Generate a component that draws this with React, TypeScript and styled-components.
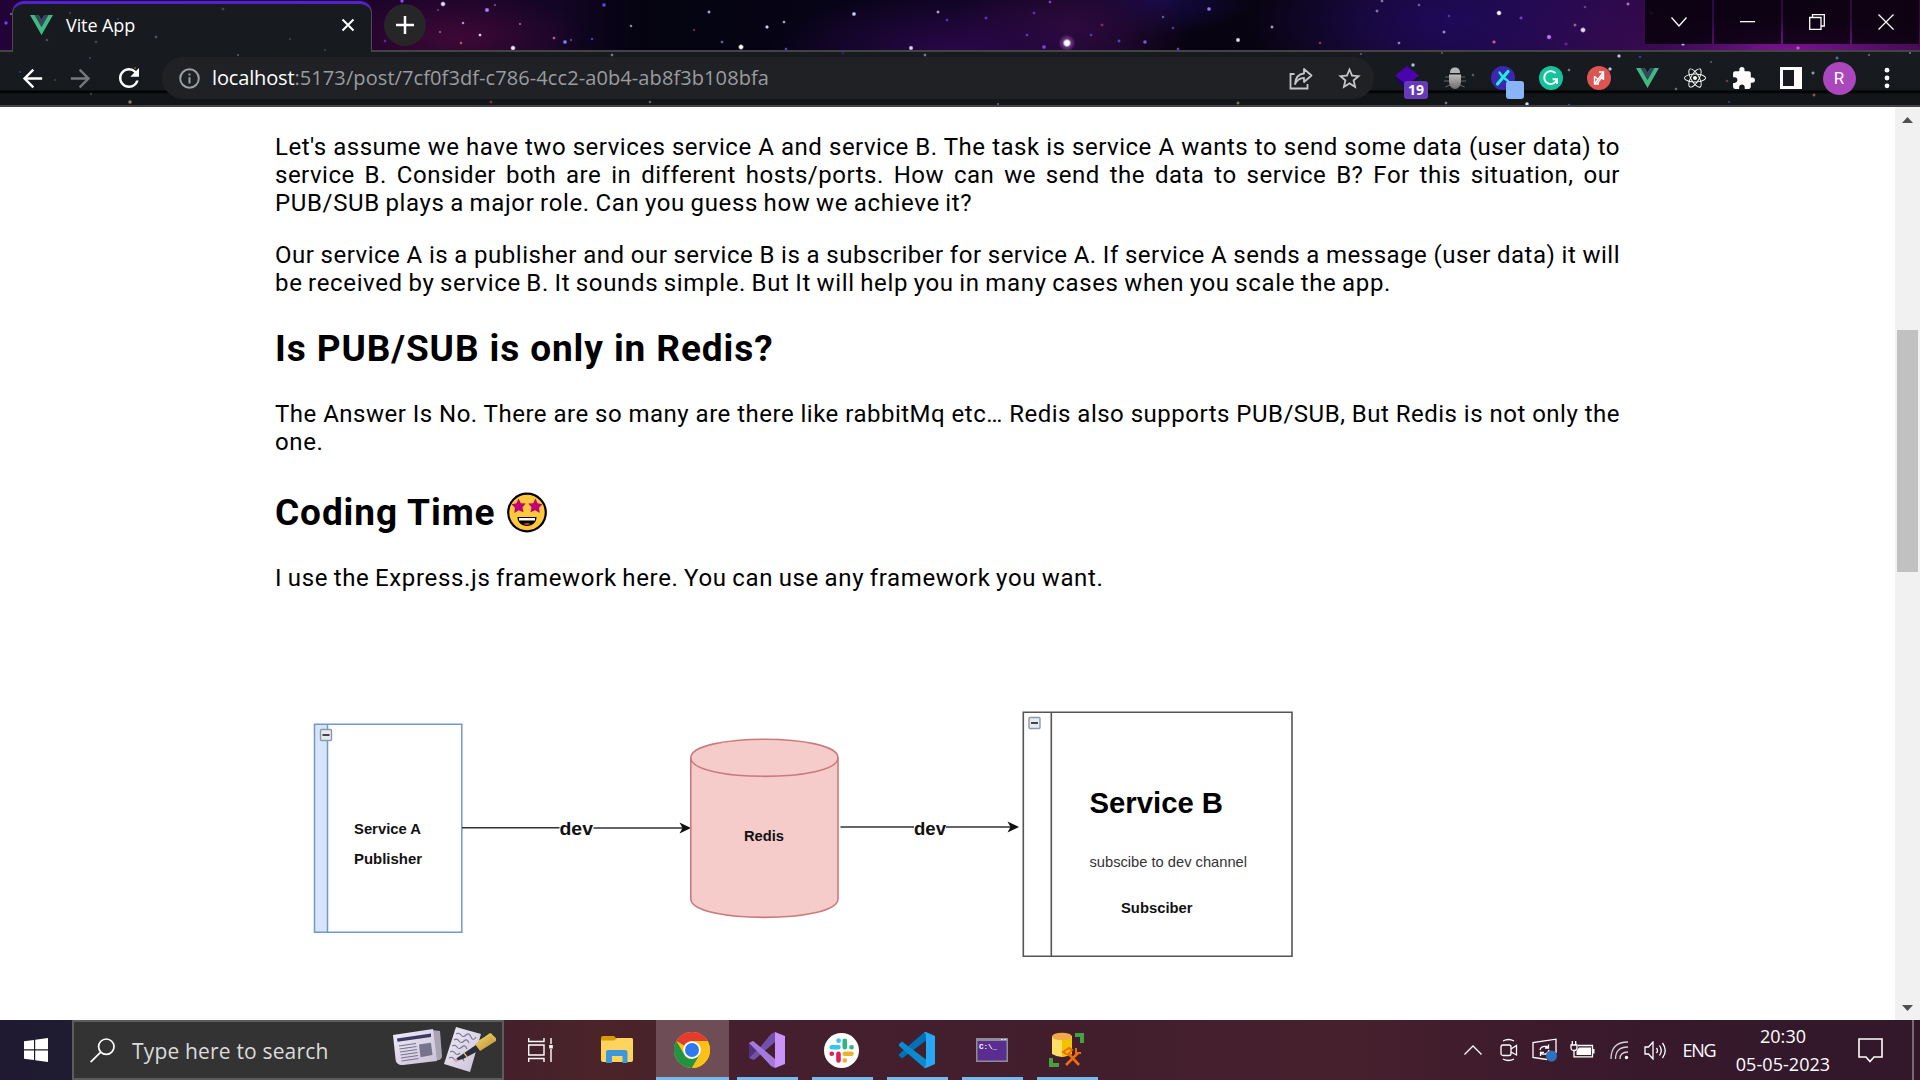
import React from "react";
import styled, { createGlobalStyle } from "styled-components";
import { MdArrowBack, MdArrowForward, MdExtension, MdRefresh, MdStarBorder } from "react-icons/md";
import { FaReact } from "react-icons/fa";

const GlobalStyle = createGlobalStyle`
  * { box-sizing: border-box; }
  body { margin: 0; background: #fff; overflow: hidden; }
  svg { display: block; flex: none; }
`;

const uiFont = `"Open Sans", "Noto Sans", sans-serif`;

/* ---------- star field backgrounds ---------- */

type Star = [x: number, y: number, r: number, color: string];

const field = (stars: Star[]) =>
  stars
    .map(([x, y, r, c]) => `radial-gradient(circle at ${x}px ${y}px, ${c} 0, ${c} ${r * 0.6}px, transparent ${r + 0.6}px)`)
    .join(",");

const skyStars: Star[] = [
  [6, 23, 1.6, "#7a3cff"], [11, 14, 1, "#7d5a8c"], [402, 1, 1.6, "#8c4dff"], [443, 4, 2.2, "#eadcff"],
  [487, 10, 2, "#b37cff"], [495, 5, 1, "#7a4a80"], [438, 10, 1, "#6a3370"], [463, 23, 1.1, "#c98ad0"],
  [440, 32, 1, "#a05890"], [480, 35, 1.2, "#eccbe8"], [461, 43, 1.2, "#b3506e"], [513, 48, 2.2, "#f3eaff"],
  [520, 24, 1, "#9d5f91"], [554, 38, 1.2, "#b06088"], [565, 42, 1.8, "#7b83ff"], [571, 40, 1, "#72416c"],
  [604, 5, 1.8, "#5a48e0"], [631, 26, 1.1, "#8c8cad"], [592, 39, 1.1, "#4a3fb0"], [385, 41, 1.1, "#5733a0"],
  [709, 12, 1.3, "#a9a7cf"], [694, 30, 1, "#733340"], [767, 27, 1.5, "#d5d4f0"], [784, 22, 1.2, "#a0a0c5"],
  [722, 42, 1.2, "#66668c"], [741, 47, 2.4, "#ffffff"], [786, 49, 1.2, "#4747aa"], [854, 14, 1.8, "#c8d0ff"],
  [938, 12, 1.3, "#a8a3d3"], [911, 48, 2, "#d9d0ff"], [947, 20, 1.2, "#5c2fb0"], [986, 18, 1.4, "#5336a8"],
  [1034, 13, 1.2, "#6732a3"], [1050, 2, 1.3, "#7a3cb0"], [1027, 35, 1.2, "#5b3aa5"], [1044, 47, 1.8, "#8244e0"],
  [1067, 43, 3.8, "#ffffff"], [1067, 43, 8, "rgba(200,120,230,.35)"], [1102, 25, 1.3, "#70345f"],
  [1091, 35, 1.2, "#3548a0"], [1119, 41, 1.3, "#374fc0"], [1145, 42, 1.7, "#7859e0"], [1163, 17, 1.1, "#68608c"],
  [1209, 9, 1.8, "#9a77f0"], [1173, 28, 1.1, "#54409d"], [1238, 40, 2, "#e9d5f5"], [1272, 27, 1.3, "#a5a0b5"],
  [1178, 49, 1.2, "#6342aa"], [1320, 43, 1.1, "#9a3855"], [1377, 11, 1.3, "#85729c"], [1382, 1, 1.2, "#8d77a5"],
  [1399, 43, 1.2, "#9779b8"], [1419, 5, 1.2, "#7052a8"], [1444, 32, 1.3, "#a48ac5"], [1449, 16, 1.2, "#5d2ca5"],
  [1499, 13, 2.2, "#ffffff"], [1521, 18, 1.4, "#7440d0"], [1494, 42, 1.5, "#d6559e"], [1549, 37, 2.1, "#c878f0"],
  [1566, 44, 1.5, "#67278a"], [1583, 30, 2.4, "#ead7f7"], [1575, 25, 1.3, "#a15c90"], [1628, 4, 1.4, "#a576b0"],
  [1585, 7, 1.1, "#73408b"], [1651, 13, 1.6, "#6b5277"], [1683, 44, 1.6, "#b6a9ff"], [1798, 48, 1.5, "#d45bc5"],
];

const toolbarStars: Star[] = [
  [90, 6, 1, "#39434a"], [20, 20, 1, "#27406f"], [55, 28, 1, "#3a3f2b"], [135, 16, 1, "#5d5522"],
  [130, 50, 1.7, "#86805a"], [91, 42, 1, "#3f3f46"], [238, 3, 1, "#50555d"], [491, 50, 1.3, "#693b32"],
  [612, 3, 1.2, "#737982"], [843, 1, 1, "#292b87"], [925, 3, 1.2, "#7a7a7d"], [650, 50, 1.1, "#676a70"],
  [998, 52, 1, "#60605f"], [1238, 51, 1.3, "#777758"], [1361, 2, 1, "#535762"], [1442, 1, 1, "#595c55"],
  [1413, 13, 1.7, "#aebed3"], [1473, 23, 1.2, "#535b65"], [1446, 51, 1.2, "#747886"], [1527, 52, 1.7, "#d0e2fa"],
  [1569, 18, 1.2, "#717781"], [1610, 17, 1.6, "#b8c8e8"], [1619, 4, 1.6, "#b3c3e3"], [1569, 53, 1.1, "#35558a"],
  [1640, 5, 1.1, "#28438a"], [1676, 37, 1.2, "#626872"], [1711, 10, 1, "#59555b"], [1727, 29, 1.1, "#65434c"],
  [1813, 21, 1.4, "#8f9caf"], [1814, 43, 1.3, "#8a5c53"], [1729, 50, 1, "#313c8c"], [1837, 6, 1.4, "#49719b"],
  [1869, 3, 1, "#65696d"], [1910, 1, 1, "#686d72"],
];

const tabStars: Star[] = [
  [57, 9, 1, "#3d4450"], [210, 5, 1.2, "#4b4346"], [105, 15, 1, "#2a3f63"], [34, 36, 1.2, "#465158"],
  [83, 38, 1.2, "#414b51"], [143, 33, 1.2, "#4e5863"], [277, 35, 1, "#3c3e41"], [312, 46, 1, "#3d4043"],
];

/* ---------- page frame ---------- */

const Screen = styled.div`
  width: 1920px;
  height: 1080px;
  display: flex;
  flex-direction: column;
  overflow: hidden;
  background: #fff;
`;

const TabStrip = styled.header`
  height: 52px;
  flex: none;
  display: flex;
  align-items: flex-start;
  padding: 0 1px 0 12px;
  border-bottom: 2px solid #434346;
  background:
    ${field(skyStars)},
    radial-gradient(ellipse 130px 50px at 455px 38px, #3e0836 0, transparent 100%),
    radial-gradient(ellipse 190px 60px at 960px 50px, #290748 0, transparent 100%),
    radial-gradient(ellipse 120px 60px at 1070px 28px, #300a3c 0, transparent 100%),
    radial-gradient(ellipse 100px 35px at 1155px 0px, #150b4a 0, transparent 100%),
    radial-gradient(ellipse 200px 90px at 1450px 20px, #1d0a58 0, transparent 100%),
    radial-gradient(ellipse 160px 70px at 1600px 30px, #370a4c 0, transparent 100%),
    radial-gradient(ellipse 180px 34px at 1790px 50px, #7a1391 0, transparent 100%),
    linear-gradient(90deg, #210338 0, #1b0329 380px, #120526 560px, #04030f 640px, #060415 800px, #0d0420 1000px, #070310 1220px, #0b0515 1320px, #26094b 1560px, #35073e 1920px);
`;

const Tab = styled.div`
  width: 360px;
  height: 52px;
  flex: none;
  display: flex;
  align-items: center;
  padding: 0 16px 7px 17px;
  border: 1px solid #4b4a50;
  border-bottom: 0;
  border-top: 3px solid #5322cc;
  border-radius: 12px 12px 0 0;
  background: ${field(tabStars)}, #171a1f;
  margin-top: 1px;
`;

const TabTitle = styled.span`
  flex: 1;
  margin-left: 13px;
  font: 400 18px/24px ${uiFont};
  letter-spacing: -0.1px;
  color: #fff;
`;

const NewTab = styled.div`
  width: 42px;
  height: 42px;
  margin: 4px 0 0 12px;
  border-radius: 50%;
  display: grid;
  place-items: center;
  background: #262527;
`;

const WindowButtons = styled.div`
  display: flex;
  gap: 2px;
  margin-left: auto;
`;

const WindowButton = styled.div`
  width: 67px;
  height: 44px;
  display: grid;
  place-items: center;
  background: rgba(8, 1, 12, 0.86);
`;

const Toolbar = styled.nav`
  height: 55px;
  flex: none;
  display: flex;
  align-items: center;
  padding: 0 0 1px 18px;
  border-bottom: 2px solid #434346;
  background:
    ${field(toolbarStars)},
    linear-gradient(180deg, #171a1f 0, #171a1d 38px, #000 39px, #000 40px, #131619 42px, #131619 100%);
`;

const NavIcon = styled.span<{ $dim?: boolean }>`
  width: 28px;
  flex: none;
  margin-right: 20px;
  display: grid;
  place-items: center;
  color: ${(p) => (p.$dim ? "#77797c" : "#fff")};
`;

const Omnibox = styled.div`
  width: 1212px;
  height: 42px;
  flex: none;
  display: flex;
  align-items: center;
  padding: 0 14px 0 17px;
  border-radius: 21px;
  background: #202124;
`;

const Url = styled.span`
  flex: 1;
  margin: 0 0 0 12px;
  font: 400 20px/28px ${uiFont};
  letter-spacing: 0.09px;
  color: #9a9ca0;
  white-space: nowrap;
`;

const Host = styled.span`
  color: #fff;
  letter-spacing: -0.15px;
`;

const OmniIcon = styled.span`
  width: 24px;
  margin-left: 23px;
  color: #c5c6c8;
`;

const Extensions = styled.div`
  display: flex;
  align-items: center;
  margin-left: 9px;
  height: 42px;
`;

const Extension = styled.span`
  width: 48px;
  height: 42px;
  display: grid;
  place-items: center;
  color: #fff;
`;

const Badged = styled.span`
  position: relative;
  width: 24px;
  height: 24px;
`;

const Badge = styled.span<{ $color: string; $w: number; $x: number }>`
  position: absolute;
  left: ${(p) => p.$x}px;
  top: 15px;
  width: ${(p) => p.$w}px;
  height: 18px;
  border-radius: 3px;
  background: ${(p) => p.$color};
  color: #fff;
  font: 700 14px/18px ${uiFont};
  text-align: center;
`;

const Avatar = styled.span`
  width: 33px;
  height: 33px;
  border-radius: 50%;
  background: #ab47bc;
  color: #fff;
  font: 400 17px/33px Roboto, sans-serif;
  text-align: center;
`;

/* ---------- article ---------- */

const Viewport = styled.main`
  flex: 1;
  min-height: 0;
  display: flex;
  background: #fff;
`;

const Article = styled.article`
  flex: 1;
  min-height: 0;
  overflow: hidden;
  padding: 26px 0 0 275px;
  font: 400 24px/28px Roboto, sans-serif;
  color: #000;
`;

const Paragraph = styled.p`
  width: 1345px;
  margin: 0 0 24px;
`;

const Line = styled.span<{ $full?: boolean }>`
  display: block;
  width: 1345px;
  white-space: pre-wrap;
  letter-spacing: ${(p) => (p.$full ? 0.5 : 0.65)}px;
  word-spacing: -1px;
  text-align-last: ${(p) => (p.$full ? "justify" : "left")};
`;

const Heading = styled.h2`
  display: flex;
  align-items: center;
  gap: 12px;
  margin: 30px 0;
  font: 700 37px/43px Roboto, sans-serif;
  letter-spacing: 0.9px;
  white-space: nowrap;
`;

const EmojiHeading = styled(Heading)`
  padding-top: 5px;
`;

const Figure = styled.figure`
  margin: 113px 0 0 30px;
`;

const ScrollTrack = styled.aside`
  width: 25px;
  display: flex;
  flex-direction: column;
  align-items: center;
  background: #f1f1f1;
`;

const ScrollButton = styled.span`
  height: 25px;
  display: grid;
  place-items: center;
`;

const ScrollSpace = styled.span<{ $h?: number }>`
  ${(p) => (p.$h ? `height: ${p.$h}px;` : "flex: 1;")}
`;

const ScrollThumb = styled.span`
  width: 21px;
  height: 242px;
  background: #c1c1c1;
`;

/* ---------- taskbar ---------- */

const Taskbar = styled.footer`
  height: 60px;
  flex: none;
  display: flex;
  background: linear-gradient(90deg, #1f1a31 0, #1f1b30 72px, #441f2c 504px, #4b2428 600px, #451f2d 740px, #421e2d 1100px, #47202d 1350px, #3b1a2c 1560px, #33182b 1800px, #33172a 100%);
`;

const StartButton = styled.div`
  width: 72px;
  display: grid;
  place-items: center;
`;

const SearchBox = styled.div`
  width: 432px;
  display: flex;
  align-items: center;
  padding: 0 4px 0 16px;
  border: 2px solid #5c5c5c;
  background: #333;
`;

const SearchText = styled.span`
  flex: 1;
  margin: 2px 0 0 17px;
  font: 400 21px/28px ${uiFont};
  letter-spacing: 0.17px;
  color: #dcdcdc;
  white-space: nowrap;
`;

const TaskButton = styled.div<{ $w: number; $active?: boolean }>`
  width: ${(p) => p.$w}px;
  display: grid;
  place-items: center;
  padding-right: 2px;
`;

const RunningButton = styled(TaskButton)<{ $line: number }>`
  background:
    linear-gradient(#76b9ed, #76b9ed) center bottom / ${(p) => p.$line}px 3px no-repeat
    ${(p) => (p.$active ? ", linear-gradient(#6f4d56, #6f4d56)" : "")};
`;

const Tray = styled.div`
  margin-left: auto;
  display: flex;
  align-items: center;
  color: #fff;
`;

const TrayItem = styled.span<{ $w: number }>`
  width: ${(p) => p.$w}px;
  display: grid;
  place-items: center;
`;

const Language = styled(TrayItem)`
  font: 400 18px/27px ${uiFont};
  letter-spacing: -1.2px;
`;

const Clock = styled.div`
  width: 116px;
  text-align: center;
  font: 400 18px/28px ${uiFont};
  letter-spacing: 0.05px;
`;

const PeekLine = styled.span`
  width: 2px;
  height: 60px;
  margin: 0 6px 0 13px;
  background: #7b6974;
`;

/* ---------- icons ---------- */

const VueLogo = ({ w = 23, h = 20 }: { w?: number; h?: number }) => (
  <svg width={w} height={h} viewBox="0 0 24 21" preserveAspectRatio="none">
    <path d="M0 0H9L12 5.2 15 0H24L12 21Z" fill="#42b883" />
    <path d="M4.7 0H9L12 5.2 15 0H19.3L12 12.8Z" fill="#35495e" />
  </svg>
);

const InfoIcon = () => (
  <svg width="21" height="21" viewBox="0 0 21 21" fill="none" stroke="#9aa0a6" strokeWidth="2">
    <circle cx="10.5" cy="10.5" r="9.3" />
    <path d="M10.5 9.3V15.5M10.5 5.4V7.5" />
  </svg>
);

const ShareIcon = () => (
  <svg width="24" height="24" viewBox="0 0 24 24" fill="none" stroke="#c5c6c8" strokeWidth="1.8">
    <path d="M5.500 8H1.500V22.500H18.500V18" />
    <path d="M6 18C6.500 11.500 9.500 8 15 7.500V3L22.500 9.500 15 16V11.800C11 12 8 14 6 18Z" strokeLinejoin="round" />
  </svg>
);

const DiamondIcon = () => (
  <svg width="24" height="24" viewBox="0 0 24 24">
    <path d="M1 14 5 11 20 20 12 24Z" fill="#210070" />
    <path d="M12 0 24 9.500 12 19 0 9.500Z" fill="#4a04ad" />
  </svg>
);

const BugIcon = () => (
  <svg width="22" height="24" viewBox="0 0 22 24">
    <defs>
      <linearGradient id="bug" x1="0" y1="0" x2="0" y2="1">
        <stop offset="0" stopColor="#bdbdbd" />
        <stop offset="1" stopColor="#6c6c6c" />
      </linearGradient>
    </defs>
    <path d="M5 11H1M5 15H0M6 19L1.500 21M17 11H21M17 15H22M16 19L20.500 21" stroke="#66686a" strokeWidth="1" />
    <path d="M6 7C6 3 8 1.500 11 1.500S16 3 16 7Z" fill="#b5b5b5" />
    <path d="M5 8.500H17V15C17 20 14 23 11 23S5 20 5 15Z" fill="url(#bug)" />
  </svg>
);

const PlaneIcon = () => (
  <svg width="24" height="24" viewBox="0 0 24 24">
    <circle cx="12" cy="12" r="12" fill="#3c28b0" />
    <path d="M17 5.500 6.500 18" stroke="#1df2dc" strokeWidth="3.200" strokeLinecap="round" />
    <path d="M8.500 6.500 11 10M13 12 17 15" stroke="#1df2dc" strokeWidth="2.200" strokeLinecap="round" />
  </svg>
);

const GrammarIcon = () => (
  <svg width="24" height="24" viewBox="0 0 24 24" fill="none">
    <circle cx="12" cy="12" r="12" fill="#15c39a" />
    <path d="M16.500 7.200A6.500 6.500 0 1 0 18 13.200H13.500M18 13V18" stroke="#fff" strokeWidth="1.900" />
  </svg>
);

const RedIcon = () => (
  <svg width="24" height="24" viewBox="0 0 24 24" fill="none">
    <circle cx="12" cy="12" r="12" fill="#dc5552" />
    <path d="M7.500 10V18H12M7.500 18 16.500 6M12 6H16.500V14M7.500 10.500 10.500 13M13.500 11 16.500 13.500M9.800 18 16.500 9" stroke="#fff" strokeWidth="1.400" />
  </svg>
);

const PanelIcon = () => (
  <svg width="22" height="22" viewBox="0 0 22 22">
    <path d="M0 0H22V22H0ZM3 3V19H14V3Z" fill="#fff" fillRule="evenodd" />
  </svg>
);

const DotsIcon = () => (
  <svg width="6" height="22" viewBox="0 0 6 22" fill="#fff">
    <circle cx="3" cy="3.200" r="2.400" />
    <circle cx="3" cy="11" r="2.400" />
    <circle cx="3" cy="18.800" r="2.400" />
  </svg>
);

const StarFace = () => (
  <svg width="40" height="41" viewBox="0 0 40 41">
    <circle cx="20" cy="20.500" r="18.800" fill="#ffc83d" stroke="#000" strokeWidth="2.200" />
    <g fill="#bf0077">
      <path d="M11.500 6.500 13.800 11.200 18.800 11.400 15.500 15.200 16.500 20.300 11.800 18.200 7.300 21 8 15.800 4.500 12.200 9.500 11.200Z" />
      <path d="M28.500 6.500 30.500 11.200 35.500 12.200 32 15.800 32.700 21 28.200 18.200 23.500 20.300 24.500 15.200 21.200 11.400 26.200 11.200Z" />
    </g>
    <path d="M10.500 25H29.500C29.500 30.500 25.500 34 20 34S10.500 30.500 10.500 25Z" fill="#000" />
    <path d="M12 26H28V28.500H12Z" fill="#fff" />
    <path d="M16.500 32C18.500 30.700 21.500 30.700 23.500 32 21.500 33.200 18.500 33.200 16.500 32Z" fill="#e8331c" />
  </svg>
);

const WindowsLogo = () => (
  <svg width="24" height="24" viewBox="0 0 24 24" fill="#fff">
    <path d="M0 3.300 10 1.900V11.300H0ZM11.200 1.700 24 0V11.300H11.200ZM0 12.500H10V22.100L0 20.700ZM11.200 12.500H24V24L11.200 22.300Z" />
  </svg>
);

const SearchIcon = () => (
  <svg width="25" height="25" viewBox="0 0 25 25" fill="none" stroke="#fff" strokeWidth="1.700">
    <circle cx="16.300" cy="8.700" r="7.700" />
    <path d="M10.700 14.200.600 24.200" />
  </svg>
);

const NewsArt = () => (
  <svg width="106" height="48" viewBox="0 0 106 48">
    <defs>
      <linearGradient id="paper" x1="0" y1="0" x2="1" y2="1">
        <stop offset="0" stopColor="#f0ecf8" />
        <stop offset="1" stopColor="#c9c1d6" />
      </linearGradient>
      <linearGradient id="gold" x1="0" y1="0" x2="1" y2="1">
        <stop offset="0" stopColor="#f7dc7a" />
        <stop offset="1" stopColor="#b98a24" />
      </linearGradient>
    </defs>
    <path d="M40 4 48 5 50 30C50 33 47 35 44 34Z" fill="#a9a3b4" />
    <path d="M1 9 41 3 45 35 11 39C6 39 4 37 3.500 33Z" fill="url(#paper)" />
    <path d="M5 12.500 39 7.500V11L5.500 15.800Z" fill="#3b3964" />
    <path d="M27 18.500 39 16.700 40.500 29 28.500 31.200Z" fill="#77738f" />
    <path d="M7 20 24 17.500M7.500 23 24.500 20.500M8 26 25 23.500M8.500 29 25.500 26.500M9 32 26 29.500M9.500 35 26.500 32.500" stroke="#77728f" strokeWidth="1.200" />
    <path d="M64 1 89 8 78 46 52 38Z" fill="url(#paper)" />
    <path d="M64 8q3-2 5 1t5 0 5 2 5 0M62 14q3-2 5 1t5 0 5 2M60 20q3-2 5 1t5 0 5 2M58 26q3-2 5 1t5 0M57 32q3-2 5 1t5 0 5 2" stroke="#77758f" strokeWidth="1.100" fill="none" />
    <path d="M65 32 86 17.500 89 23.500 71 33 63 35Z" fill="#2b2e38" />
    <path d="M83 18 98 7 104 12 104 15 88 25Z" fill="url(#gold)" />
    <path d="M72 27 75 31M87 15 99 8 103 14" stroke="#e7bf4f" strokeWidth="1.300" fill="none" />
    <circle cx="64" cy="34.500" r="1.800" fill="#e2a59c" />
  </svg>
);

const TaskViewIcon = () => (
  <svg width="25" height="24" viewBox="0 0 25 24" fill="none" stroke="#fff" strokeWidth="1.400">
    <path d="M.7 0V3.500H16V0M.7 24V20.500H16V24M23 0V6M23 11V24" />
    <path d="M.7 7H16V17H.7Z" />
    <path d="M21.200 7H24.800V10.500H21.200Z" fill="#fff" stroke="none" />
  </svg>
);

const FolderIcon = () => (
  <svg width="32" height="28" viewBox="0 0 32 28">
    <path d="M0 2Q0 0 2 0H13L16 3V6H0Z" fill="#d99a06" />
    <path d="M0 4.500H13L16 2H31Q32 2 32 4V24Q32 26 30 26H2Q0 26 0 24Z" fill="#ffd45e" />
    <path d="M5 27V16Q5 14 7 14H24Q26.500 14 26.500 16V27H21.500V20H11V27Z" fill="#3c97dd" />
  </svg>
);

const ChromeIcon = () => (
  <svg width="36" height="36" viewBox="0 0 36 36">
    <circle cx="18" cy="18" r="18" fill="#fbc116" />
    <path d="M2.400 9A18 18 0 0 1 33.600 9H18A9 9 0 0 0 10.200 13.500Z" fill="#e33b2e" />
    <path d="M2.400 9 10.200 22.500A9 9 0 0 0 18 27L25.800 22.500 18 36A18 18 0 0 1 2.400 9Z" fill="#229342" />
    <path d="M18 36 25.800 22.500 27 18 24 9H33.600A18 18 0 0 1 18 36Z" fill="#fbc116" />
    <circle cx="18" cy="18" r="8.800" fill="#fff" />
    <circle cx="18" cy="18" r="7" fill="#2f79ee" />
  </svg>
);

const VisualStudioIcon = () => (
  <svg width="36" height="36" viewBox="0 0 36 36">
    <path d="M0 11 4 9 11 15 4 24 0 26Z" fill="#52307c" />
    <path d="M26 0V10L5 28 0 26 11 15.500 22 2Z" fill="#7350ac" />
    <path d="M0 11 4 9 26 27V36L22 34 9 20Z" fill="#a57add" />
    <path d="M26 0 36 4V32L26 36Z" fill="#c993fb" />
  </svg>
);

const SlackIcon = () => (
  <svg width="35" height="35" viewBox="0 0 35 35">
    <circle cx="17.500" cy="17.500" r="17.500" fill="#fff" />
    <g strokeWidth="4.600" strokeLinecap="round" fill="none">
      <path d="M14.600 7.800V7.600M7.700 14.300H14.400" stroke="#36c5f0" />
      <path d="M20.800 7.700V14.300M27.600 14.300H27.500" stroke="#2eb67d" />
      <path d="M20.800 20.800H27.500M20.800 27.500V27.400" stroke="#ecb22e" />
      <path d="M14.500 20.800V27.500M7.700 20.800H7.800" stroke="#e01e5a" />
    </g>
  </svg>
);

const VsCodeIcon = () => (
  <svg width="36" height="36" viewBox="0 0 36 36">
    <path d="M0 24 3 26.500 27 8.500V0L25 .500 0 22Z" fill="#0070b8" />
    <path d="M0 12 3 9.500 27 27.500V36L25 35.500 0 14Z" fill="#0b8ad0" />
    <path d="M27 0 36 4V32L27 36 25 35.500Q27 35 27 32V4Q27 1 25 .500Z" fill="#27a8f2" />
  </svg>
);

const TerminalIcon = () => (
  <svg width="32" height="24" viewBox="0 0 32 24">
    <path d="M0 0H32V24H0Z" fill="#8d8d95" />
    <path d="M1.500 3H30.500V22.500H1.500Z" fill="#5a2d91" />
    <path d="M25 1H27V2H25ZM28 1H30V2H28Z" fill="#ddd" />
    <text x="3" y="10.500" fontFamily="Liberation Mono, monospace" fontSize="7.500" fontWeight="700" fill="#fff">C:\_</text>
  </svg>
);

const DatabaseIcon = () => (
  <svg width="36" height="36" viewBox="0 0 36 36">
    <path d="M26 3H33V11M2 26V33H10" stroke="#41a23f" strokeWidth="4" fill="none" />
    <path d="M3 4H23V22Q13 28 3 22Z" fill="#ffe066" />
    <path d="M13 6H23V22L13 25Z" fill="#f4c300" />
    <ellipse cx="13" cy="4.500" rx="10" ry="3.800" fill="#f0a848" />
    <path d="M17 33 29 21M30 33 19 21" stroke="#ee6c09" strokeWidth="2.600" fill="none" />
    <path d="M14 20 20 16 23 18 19 23ZM27 16V21H32" stroke="#ee6c09" strokeWidth="2" fill="none" />
  </svg>
);

/* ---------- service diagram ---------- */

const labelFont = `"Liberation Sans", Arial, sans-serif`;

type LabelProps = { x: number; y: number; size: number; length: number; bold?: boolean; color?: string; children: string };

const Label = ({ x, y, size, length, bold = true, color = "#111", children }: LabelProps) => (
  <text x={x} y={y} fontFamily={labelFont} fontSize={size} fontWeight={bold ? 700 : 400} fill={color} textLength={length} lengthAdjust="spacingAndGlyphs">
    {children}
  </text>
);

const Toggle = ({ x, y }: { x: number; y: number }) => (
  <g>
    <rect x={x} y={y} width="11" height="11" rx="1" fill="#e5eaf0" stroke="#8a9aab" strokeWidth="1.400" />
    <path d={`M${x + 2} ${y + 5.5}h7`} stroke="#333" strokeWidth="1.800" />
  </g>
);

const Diagram = () => (
  <svg width="1000" height="260" viewBox="305 705 1000 260">
    <rect x="314.500" y="724" width="13" height="208.500" fill="#d6e5fa" />
    <path d="M314.500 724.200H461.800V932.300H314.500ZM327.500 724V932" fill="none" stroke="#7398c8" strokeWidth="1.500" />
    <Toggle x={320.500} y={729.500} />
    <Label x={354} y={834} size={15} length={67}>Service A</Label>
    <Label x={354} y={863.500} size={15} length={68}>Publisher</Label>

    <path d="M462 827.700H559.500M593.500 828H684" stroke="#333" strokeWidth="1.600" />
    <path d="M691 828 679.500 822.500 682.500 828 679.500 833.500Z" fill="#111" />
    <Label x={559.500} y={835} size={18.500} length={33.500}>dev</Label>

    <path d="M690.800 757.800C690.800 733 838 733 838 757.800V899C838 923.500 690.800 923.500 690.800 899Z" fill="#f6cccb" stroke="#c97b7b" strokeWidth="1.600" />
    <path d="M690.800 757.800C690.800 782.500 838 782.500 838 757.800" fill="none" stroke="#c97b7b" strokeWidth="1.600" />
    <Label x={744} y={840.500} size={15} length={40}>Redis</Label>

    <path d="M840.500 827H914M946 827H1012" stroke="#333" strokeWidth="1.500" />
    <path d="M1019 827 1007.500 821.500 1010.500 827 1007.500 832.500Z" fill="#111" />
    <Label x={914} y={835} size={18} length={32}>dev</Label>

    <path d="M1023.300 712.200H1292V956.200H1023.300ZM1051.300 712V956" fill="none" stroke="#555" strokeWidth="1.600" />
    <Toggle x={1029} y={717.500} />
    <Label x={1089.500} y={812.500} size={30} length={133.500} color="#000">Service B</Label>
    <Label x={1089.500} y={867} size={14.500} length={157.500} bold={false} color="#333">subscibe to dev channel</Label>
    <Label x={1121} y={912.500} size={14.500} length={71.500}>Subsciber</Label>
  </svg>
);

/* ---------- app ---------- */

const thin = { fill: "none", stroke: "#fff", strokeWidth: 1.3 };

export default function App() {
  return (
    <Screen>
      <GlobalStyle />
      <TabStrip>
        <Tab>
          <VueLogo />
          <TabTitle>Vite App</TabTitle>
          <svg width="14" height="14" viewBox="0 0 14 14">
            <path d="M1.500 1.500 12.500 12.500M12.500 1.500 1.500 12.500" stroke="#fff" strokeWidth="2" />
          </svg>
        </Tab>
        <NewTab>
          <svg width="18" height="18" viewBox="0 0 18 18">
            <path d="M9 0V18M0 9H18" stroke="#fff" strokeWidth="2.500" />
          </svg>
        </NewTab>
        <WindowButtons>
          <WindowButton>
            <svg width="16" height="10" viewBox="0 0 16 10" {...thin}><path d="M.500.500 8 9 15.500.500" /></svg>
          </WindowButton>
          <WindowButton>
            <svg width="15" height="2" viewBox="0 0 15 2"><path d="M0 0H15V1.300H0Z" fill="#fff" /></svg>
          </WindowButton>
          <WindowButton>
            <svg width="16" height="16" viewBox="0 0 16 16" {...thin}><path d="M.700 3.500H12V15.300H.700ZM3.500 3.500V.700H15.300V12H12" /></svg>
          </WindowButton>
          <WindowButton>
            <svg width="16" height="16" viewBox="0 0 16 16" {...thin}><path d="M.500.500 15.500 15.500M15.500.500.500 15.500" /></svg>
          </WindowButton>
        </WindowButtons>
      </TabStrip>

      <Toolbar>
        <NavIcon><MdArrowBack size={29} /></NavIcon>
        <NavIcon $dim><MdArrowForward size={29} /></NavIcon>
        <NavIcon><MdRefresh size={30} /></NavIcon>
        <Omnibox>
          <InfoIcon />
          <Url><Host>localhost</Host>:5173/post/7cf0f3df-c786-4cc2-a0b4-ab8f3b108bfa</Url>
          <OmniIcon><ShareIcon /></OmniIcon>
          <OmniIcon><MdStarBorder size={27} /></OmniIcon>
        </Omnibox>
        <Extensions>
          <Extension>
            <Badged><DiamondIcon /><Badge $color="#673ab7" $w={24} $x={9}>19</Badge></Badged>
          </Extension>
          <Extension><BugIcon /></Extension>
          <Extension>
            <Badged><PlaneIcon /><Badge $color="#8ab4f8" $w={18} $x={15} /></Badged>
          </Extension>
          <Extension><GrammarIcon /></Extension>
          <Extension><RedIcon /></Extension>
          <Extension><VueLogo /></Extension>
          <Extension><FaReact size={22} /></Extension>
          <Extension><MdExtension size={25} /></Extension>
          <Extension><PanelIcon /></Extension>
          <Extension><Avatar>R</Avatar></Extension>
          <Extension><DotsIcon /></Extension>
        </Extensions>
      </Toolbar>

      <Viewport>
        <Article>
          <Paragraph>
            <Line $full>Let's assume we have two services service A and service B. The task is service A wants to send some data (user data) to</Line>
            <Line $full>service B. Consider both are in different hosts/ports. How can we send the data to service B? For this situation, our</Line>
            <Line>PUB/SUB plays a major role. Can you guess how we achieve it?</Line>
          </Paragraph>
          <Paragraph>
            <Line $full>Our service A is a publisher and our service B is a subscriber for service A. If service A sends a message (user data) it will</Line>
            <Line>be received by service B. It sounds simple. But It will help you in many cases when you scale the app.</Line>
          </Paragraph>
          <Heading>Is PUB/SUB is only in Redis?</Heading>
          <Paragraph>
            <Line $full>The Answer Is No. There are so many are there like rabbitMq etc… Redis also supports PUB/SUB, But Redis is not only the</Line>
            <Line>one.</Line>
          </Paragraph>
          <EmojiHeading>Coding Time <StarFace /></EmojiHeading>
          <Paragraph>
            <Line>I use the Express.js framework here. You can use any framework you want.</Line>
          </Paragraph>
          <Figure><Diagram /></Figure>
        </Article>
        <ScrollTrack>
          <ScrollButton>
            <svg width="11" height="6" viewBox="0 0 11 6"><path d="M0 6 5.500 0 11 6Z" fill="#505050" /></svg>
          </ScrollButton>
          <ScrollSpace $h={198} />
          <ScrollThumb />
          <ScrollSpace />
          <ScrollButton>
            <svg width="11" height="6" viewBox="0 0 11 6"><path d="M0 0 5.500 6 11 0Z" fill="#505050" /></svg>
          </ScrollButton>
        </ScrollTrack>
      </Viewport>

      <Taskbar>
        <StartButton><WindowsLogo /></StartButton>
        <SearchBox>
          <SearchIcon />
          <SearchText>Type here to search</SearchText>
          <NewsArt />
        </SearchBox>
        <TaskButton $w={75}><TaskViewIcon /></TaskButton>
        <TaskButton $w={77}><FolderIcon /></TaskButton>
        <RunningButton $w={73} $line={73} $active><ChromeIcon /></RunningButton>
        <RunningButton $w={77} $line={61}><VisualStudioIcon /></RunningButton>
        <RunningButton $w={73} $line={61}><SlackIcon /></RunningButton>
        <RunningButton $w={77} $line={61}><VsCodeIcon /></RunningButton>
        <RunningButton $w={73} $line={61}><TerminalIcon /></RunningButton>
        <RunningButton $w={77} $line={61}><DatabaseIcon /></RunningButton>
        <Tray>
          <TrayItem $w={36}>
            <svg width="18" height="10" viewBox="0 0 18 10" {...thin}><path d="M.500 9.500 9 1 17.500 9.500" /></svg>
          </TrayItem>
          <TrayItem $w={36}>
            <svg width="18" height="24" viewBox="0 0 18 24" {...thin}>
              <rect x="1" y="7" width="10" height="10.500" rx="2" />
              <path d="M11 11 16.500 7.500V17L11 14M3 3Q8.500 0 14 3M3 21Q8.500 24 14 21" />
            </svg>
          </TrayItem>
          <TrayItem $w={36}>
            <svg width="26" height="24" viewBox="0 0 26 24" {...thin}>
              <path d="M15 21.500 1 19.500V4.500L24 1.200V15M8 12Q9 7.500 15 8.500L16.500 10M16.500 6.500V10H13M17 12Q16 17 10 16L8.500 14.500M8.500 18V14.500H12" />
              <circle cx="19.500" cy="18" r="5.500" fill="#2d73c0" stroke="none" />
            </svg>
          </TrayItem>
          <TrayItem $w={38}>
            <svg width="25" height="18" viewBox="0 0 25 18">
              <path d="M4 9.500V15.800H22.500V4.500H8" {...thin} />
              <path d="M9 6.500H21V14H6.500V10Z" fill="#fff" />
              <path d="M23 8H24.500V12.500H23Z" fill="#fff" />
              <path d="M1 4H7V7Q7 9.500 4 9.500T1 7ZM2.300 0V4M5.700 0V4" {...thin} />
            </svg>
          </TrayItem>
          <TrayItem $w={36}>
            <svg width="19" height="19" viewBox="0 0 19 19" {...thin}>
              <path d="M1 18Q1 1 18 1M5.500 18Q5.500 6 18 6M10 18Q10 11 18 11" opacity=".8" />
              <circle cx="16.500" cy="16.500" r="1.700" fill="#fff" stroke="none" />
            </svg>
          </TrayItem>
          <TrayItem $w={36}>
            <svg width="23" height="19" viewBox="0 0 23 19" {...thin}>
              <path d="M1 6V13H4.500L9 18V1L4.500 6ZM12.500 7Q14.500 9.500 12.500 12M15.500 4.500Q19 9.500 15.500 14.500M18.500 2Q24 9.500 18.500 17" />
            </svg>
          </TrayItem>
          <Language $w={52}>ENG</Language>
          <Clock>20:30<br />05-05-2023</Clock>
          <TrayItem $w={58}>
            <svg width="25" height="25" viewBox="0 0 25 25" {...thin} strokeWidth="1.600">
              <path d="M1 1H24V19H16L12 23.500 8 19H1Z" />
            </svg>
          </TrayItem>
          <PeekLine />
        </Tray>
      </Taskbar>
    </Screen>
  );
}
